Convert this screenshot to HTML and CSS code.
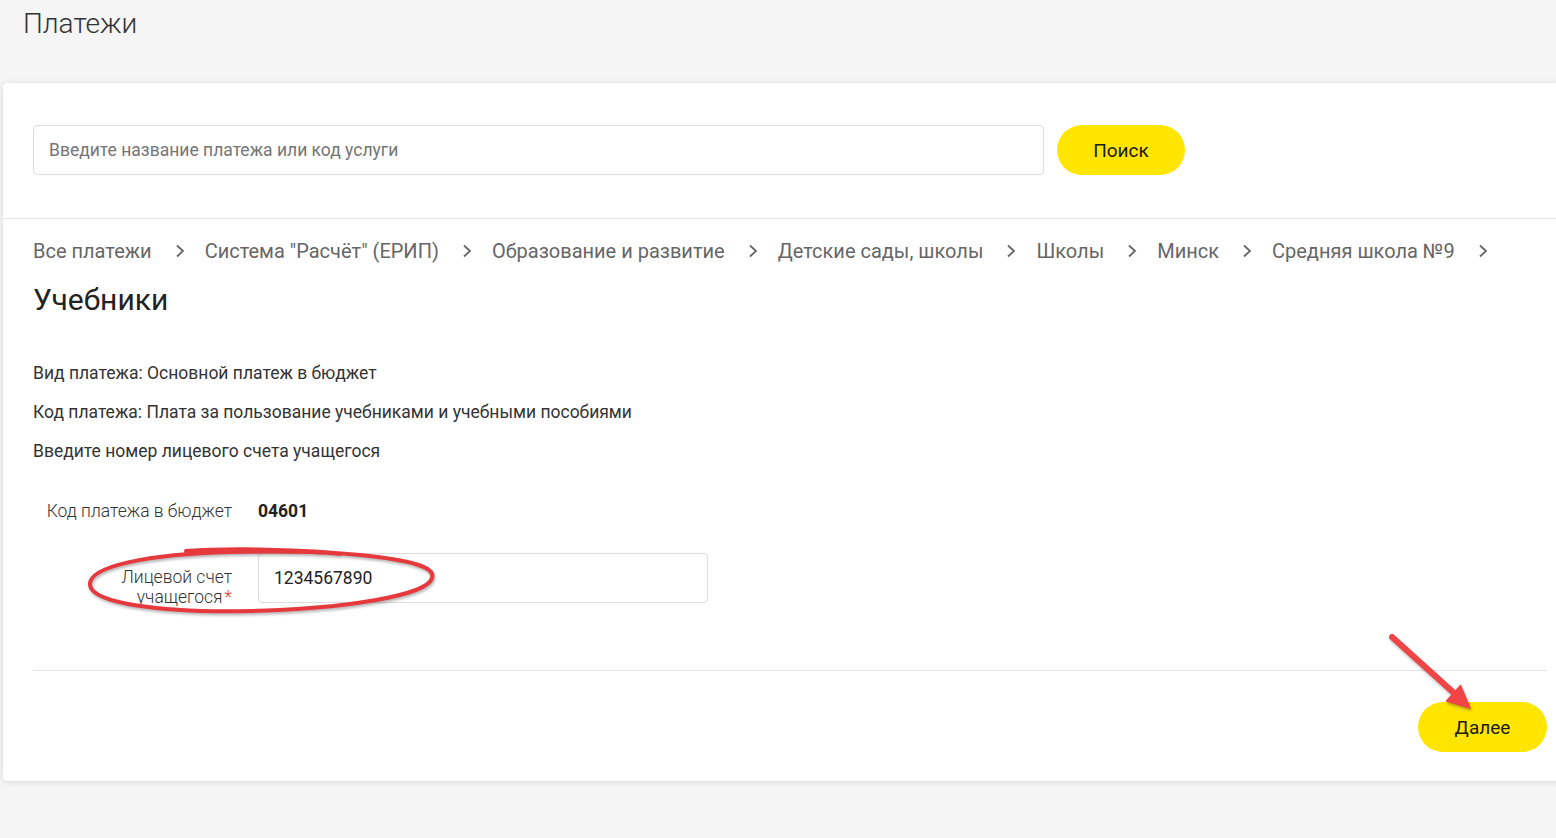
FILE: index.html
```html
<!DOCTYPE html>
<html lang="ru">
<head>
<meta charset="utf-8">
<title>Платежи</title>
<link rel="stylesheet" href="styles.css">
</head>
<body>
<h1 class="page-title">Платежи</h1>
<div class="card">
  <div class="search-row">
    <div class="search-input">Введите название платежа или код услуги</div>
    <button class="btn">Поиск</button>
  </div>
  <div class="content">
    <nav class="crumbs">
      <span>Все платежи</span><svg class="chev" viewBox="0 0 10 14"><path d="M2 1.5 L8 7 L2 12.5" /></svg>
      <span>Система "Расчёт" (ЕРИП)</span><svg class="chev" viewBox="0 0 10 14"><path d="M2 1.5 L8 7 L2 12.5" /></svg>
      <span>Образование и развитие</span><svg class="chev" viewBox="0 0 10 14"><path d="M2 1.5 L8 7 L2 12.5" /></svg>
      <span>Детские сады, школы</span><svg class="chev" viewBox="0 0 10 14"><path d="M2 1.5 L8 7 L2 12.5" /></svg>
      <span>Школы</span><svg class="chev" viewBox="0 0 10 14"><path d="M2 1.5 L8 7 L2 12.5" /></svg>
      <span>Минск</span><svg class="chev" viewBox="0 0 10 14"><path d="M2 1.5 L8 7 L2 12.5" /></svg>
      <span>Средняя школа №9</span><svg class="chev" viewBox="0 0 10 14"><path d="M2 1.5 L8 7 L2 12.5" /></svg>
    </nav>
    <h2 class="service-title">Учебники</h2>
    <div class="info">
      <p>Вид платежа: Основной платеж в бюджет</p>
      <p>Код платежа: Плата за пользование учебниками и учебными пособиями</p>
      <p>Введите номер лицевого счета учащегося</p>
    </div>
    <div class="form">
      <div class="row">
        <div class="label">Код платежа в бюджет</div>
        <div class="value">04601</div>
      </div>
      <div class="row row-input">
        <div class="label"><span class="line">Лицевой счет</span><span class="line">учащегося<span class="req">*</span></span></div>
        <div class="field">1234567890</div>
        <svg class="ellipse" viewBox="33 538 420 90" width="420" height="90"><path d="M186 551 C 230 548, 300 549, 360 555 C 410 560, 436 567, 432 578 C 428 596, 340 609, 250 611 C 160 613, 92 603, 90 585 C 88 566, 150 554, 230 552 C 280 551, 320 552, 340 554" fill="none" stroke="#e6393e" stroke-width="4" stroke-linecap="round"/></svg>
      </div>
    </div>
    <div class="footer">
      <button class="btn btn-next">Далее</button>
      <svg class="arrow" viewBox="1380 625 100 90" width="100" height="90"><path d="M1392 637 L1454 693" stroke="#f04447" stroke-width="6" stroke-linecap="round"/><path d="M1470 708 L1446.5 701 L1460.5 685.5 Z" fill="#f04447" stroke="#f04447" stroke-width="1.5" stroke-linejoin="round"/></svg>
    </div>
  </div>
</div>
</body>
</html>
```
FILE: styles.css
```css
* { box-sizing: border-box; }
html, body { margin: 0; padding: 0; }
body {
  background: #f5f5f5;
  font-family: Roboto, "Noto Sans", sans-serif;
  color: #333;
  width: 1556px;
  height: 838px;
  overflow: hidden;
}
.page-title {
  margin: 0;
  padding: 4px 0 0 23px;
  height: 83px;
  font-size: 28px;
  font-weight: 300;
  color: #333;
  line-height: 40px;
}
.card {
  margin-left: 3px;
  width: 1560px;
  height: 698px;
  background: #fff;
  border-radius: 4px;
  box-shadow: 0 1px 6px rgba(0,0,0,0.12);
}
.search-row {
  display: flex;
  align-items: flex-start;
  gap: 13px;
  padding: 42px 0 0 30px;
  height: 136px;
  border-bottom: 1px solid #e3e3e3;
}
.search-input {
  width: 1011px;
  height: 50px;
  border: 1px solid #dcdcdc;
  border-radius: 4px;
  padding: 0 15px;
  display: flex;
  align-items: center;
  font-size: 17.5px;
  color: #757575;
}
.btn {
  border: none;
  background: #ffe500;
  border-radius: 25px;
  height: 50px;
  width: 128px;
  font-family: Roboto, sans-serif;
  font-size: 19px;
  color: #1a1a1a;
  padding: 0;
}
.content { padding: 0 16px 0 30px; }
.crumbs {
  display: flex;
  align-items: center;
  height: 64px;
  font-size: 20px;
  color: #666;
}
.chev {
  width: 10px;
  height: 14px;
  margin: 0 20px 0 23px;
  fill: none;
  stroke: #666;
  stroke-width: 1.8;
}
.service-title {
  margin: 0;
  font-size: 30px;
  font-weight: 400;
  color: #222;
  line-height: 34px;
  height: 52px;
}
.info { padding-top: 19px; }
.info p {
  margin: 0;
  font-size: 17.5px;
  line-height: 39px;
  color: #333;
}
.form { padding-top: 20px; }
.row {
  display: flex;
  align-items: center;
  gap: 26px;
}
.row .label {
  width: 199px;
  padding-left: 10px;
  text-align: right;
  font-size: 17.5px;
  font-weight: 300;
  color: #333;
  line-height: 20px;
}
.value { font-size: 17.5px; font-weight: 700; color: #222; }
.row:first-child { height: 40px; }
.row-input {
  margin-top: 22px;
  height: 50px;
  align-items: flex-start;
  position: relative;
}
.row-input .label { padding-top: 14px; }
.line { display: block; }
.req { color: #e53935; margin-left: 2px; }
.field {
  width: 450px;
  height: 50px;
  border: 1px solid #dcdcdc;
  border-radius: 4px;
  padding: 0 15px;
  display: flex;
  align-items: center;
  font-size: 17.5px;
  color: #222;
}
.ellipse {
  position: absolute;
  left: 0;
  top: -15px;
  pointer-events: none;
  filter: drop-shadow(1px 2px 1.5px rgba(0,0,0,0.3));
}
.footer {
  margin-top: 67px;
  border-top: 1px solid #e3e3e3;
  display: flex;
  justify-content: flex-end;
  padding-top: 31px;
  position: relative;
}
.btn-next { width: 129px; }
.arrow {
  position: absolute;
  left: 1347px;
  top: -46px;
  filter: drop-shadow(1px 2px 1.5px rgba(0,0,0,0.3));
}
```
